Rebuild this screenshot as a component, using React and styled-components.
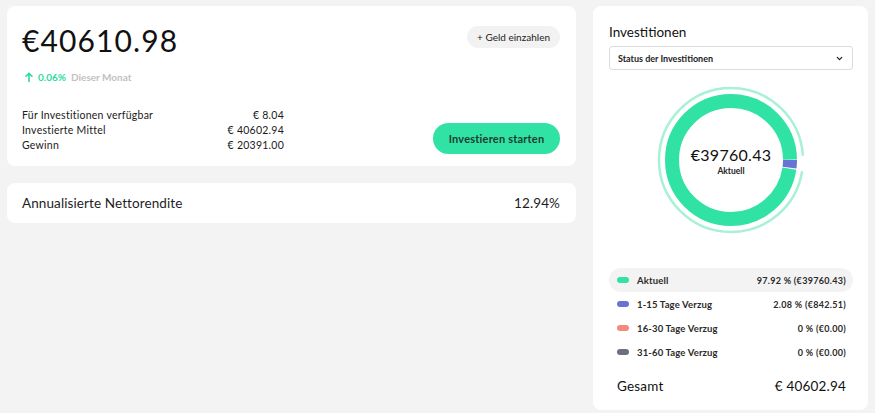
import React from "react";
import styled, { createGlobalStyle } from "styled-components";

const GlobalStyle = createGlobalStyle`
  html, body {
    margin: 0;
    padding: 0;
    background: #f3f3f3;
    font-family: "Lato", "Noto Sans", sans-serif;
    color: #1d1d1f;
  }
`;

const Page = styled.div`
  display: grid;
  grid-template-columns: 569px 275px;
  column-gap: 17px;
  align-items: start;
  padding: 6px 7px;
  width: 875px;
  height: 413px;
  box-sizing: border-box;
`;

const Column = styled.div`
  display: flex;
  flex-direction: column;
  gap: 17px;
`;

const Card = styled.div`
  background: #fff;
  border-radius: 8px;
  box-sizing: border-box;
`;

const BalanceCard = styled(Card)`
  height: 160px;
  padding: 17px 16px 0 15px;
  display: flex;
  flex-direction: column;
`;

const TopRow = styled.div`
  display: flex;
  justify-content: space-between;
  align-items: flex-start;
`;

const Balance = styled.div`
  font-size: 30px;
  font-weight: 400;
  letter-spacing: 1.1px;
  line-height: 34px;
  color: #111;
`;

const PillButton = styled.button`
  margin-top: 3px;
  border: none;
  background: #f2f2f2;
  border-radius: 12px;
  height: 22px;
  padding: 0 10px;
  font-family: inherit;
  font-size: 10px;
  color: #222;
`;

const Trend = styled.div`
  display: flex;
  align-items: center;
  gap: 5px;
  margin-top: 14px;
  margin-left: 3px;
  font-size: 10px;
`;

const TrendValue = styled.span`
  color: #2fd99f;
  font-weight: 700;
`;

const TrendLabel = styled.span`
  color: #c2c2c2;
  font-weight: 700;
`;

const BottomRow = styled.div`
  display: flex;
  justify-content: space-between;
  align-items: flex-end;
  margin-top: 25px;
`;

const Stats = styled.div`
  width: 262px;
  display: flex;
  flex-direction: column;
`;

const StatRow = styled.div`
  display: flex;
  justify-content: space-between;
  font-size: 10.5px;
  letter-spacing: 0.25px;
  line-height: 15px;
  color: #1a1a1a;
`;

const PrimaryButton = styled.button`
  border: none;
  background: #30e3a4;
  border-radius: 16px;
  height: 31px;
  width: 127px;
  margin-bottom: -1px;
  font-family: inherit;
  font-size: 11px;
  font-weight: 700;
  letter-spacing: 0.2px;
  color: #1f3a32;
`;

const ReturnCard = styled(Card)`
  height: 40px;
  padding: 0 16px 0 15px;
  display: flex;
  align-items: center;
  justify-content: space-between;
  font-size: 13.5px;
  letter-spacing: 0.1px;
`;

const SideCard = styled(Card)`
  height: 404px;
  padding: 18px 15px 0 16px;
  display: flex;
  flex-direction: column;
`;

const SideTitle = styled.div`
  font-size: 13.5px;
  line-height: 16px;
  color: #111;
`;

const Select = styled.div`
  margin-top: 6px;
  height: 24px;
  border: 1px solid #dcdcdc;
  border-radius: 3px;
  box-sizing: border-box;
  display: flex;
  align-items: center;
  justify-content: space-between;
  padding: 0 8px 0 8px;
  font-size: 9px;
  font-weight: 700;
  color: #222;
`;

const ChartWrap = styled.div`
  position: relative;
  height: 160px;
  margin-top: 10px;
  display: flex;
  justify-content: center;
`;

const ChartCenter = styled.div`
  position: absolute;
  inset: 0;
  display: flex;
  flex-direction: column;
  align-items: center;
  justify-content: center;
`;

const CenterValue = styled.div`
  font-size: 16px;
  line-height: 20px;
  color: #111;
  letter-spacing: 0.3px;
`;

const CenterLabel = styled.div`
  margin-top: 1px;
  font-size: 8.5px;
  font-weight: 700;
  color: #222;
`;

const Legend = styled.div`
  margin-top: 28px;
  display: flex;
  flex-direction: column;
`;

const LegendRow = styled.div`
  display: flex;
  align-items: center;
  height: 24px;
  padding: 0 7px 0 8px;
  border-radius: 12px;
  background: ${(p) => (p.$active ? "#f3f3f3" : "transparent")};
  font-size: 9.5px;
  font-weight: 700;
  letter-spacing: 0.15px;
  color: #2a2a2a;
`;

const Dot = styled.span`
  width: 12px;
  height: 6px;
  border-radius: 3px;
  background: ${(p) => p.$color};
  margin-right: 8px;
`;

const LegendValue = styled.span`
  margin-left: auto;
  font-size: 9px;
  letter-spacing: 0.3px;
`;

const Total = styled.div`
  margin-top: 14px;
  display: flex;
  justify-content: space-between;
  padding: 0 7px 0 8px;
  font-size: 13.5px;
  letter-spacing: 0.2px;
  color: #111;
`;

const legend = [
  { label: "Aktuell", value: "97.92 % (€39760.43)", color: "#30e3a4", active: true },
  { label: "1-15 Tage Verzug", value: "2.08 % (€842.51)", color: "#6973d6" },
  { label: "16-30 Tage Verzug", value: "0 % (€0.00)", color: "#f28b7b" },
  { label: "31-60 Tage Verzug", value: "0 % (€0.00)", color: "#6c6f7f" },
];

function Donut() {
  const r = 59;
  const c = 2 * Math.PI * r;
  const blue = c * 0.0208;
  const gap = 1;
  const green = c - blue - gap * 2;
  const ro = 72;
  const co = 2 * Math.PI * ro;
  const outerStart = co * (9 / 360);
  const outerLen = co * (347 / 360);
  return (
    <svg width="160" height="160" viewBox="0 0 160 160">
      <circle
        cx="80"
        cy="80"
        r={ro}
        fill="none"
        stroke="#a9f0d8"
        strokeWidth="2.5"
        strokeDasharray={`${outerLen} ${co}`}
        strokeDashoffset={-outerStart}
      />
      <circle
        cx="80"
        cy="80"
        r={r}
        fill="none"
        stroke="#6973d6"
        strokeWidth="14"
        strokeDasharray={`${blue} ${c}`}
      />
      <circle
        cx="80"
        cy="80"
        r={r}
        fill="none"
        stroke="#30e3a4"
        strokeWidth="14"
        strokeDasharray={`${green} ${c}`}
        strokeDashoffset={-(blue + gap)}
      />
    </svg>
  );
}

function Chevron() {
  return (
    <svg width="9" height="9" viewBox="0 0 10 10">
      <path d="M2.5 3.8 L5 6.3 L7.5 3.8" fill="none" stroke="#222" strokeWidth="1.4" strokeLinecap="round" strokeLinejoin="round" />
    </svg>
  );
}

function ArrowUp() {
  return (
    <svg width="8" height="10" viewBox="0 0 8 10">
      <path d="M4 9.5 V1.5 M1 4.3 L4 1.2 L7 4.3" fill="none" stroke="#2fd99f" strokeWidth="1.6" strokeLinecap="round" strokeLinejoin="round" />
    </svg>
  );
}

export default function App() {
  return (
    <>
      <GlobalStyle />
      <Page>
        <Column>
          <BalanceCard>
            <TopRow>
              <Balance>€40610.98</Balance>
              <PillButton>+ Geld einzahlen</PillButton>
            </TopRow>
            <Trend>
              <ArrowUp />
              <TrendValue>0.06%</TrendValue>
              <TrendLabel>Dieser Monat</TrendLabel>
            </Trend>
            <BottomRow>
              <Stats>
                <StatRow>
                  <span>Für Investitionen verfügbar</span>
                  <span>€ 8.04</span>
                </StatRow>
                <StatRow>
                  <span>Investierte Mittel</span>
                  <span>€ 40602.94</span>
                </StatRow>
                <StatRow>
                  <span>Gewinn</span>
                  <span>€ 20391.00</span>
                </StatRow>
              </Stats>
              <PrimaryButton>Investieren starten</PrimaryButton>
            </BottomRow>
          </BalanceCard>
          <ReturnCard>
            <span>Annualisierte Nettorendite</span>
            <span>12.94%</span>
          </ReturnCard>
        </Column>
        <SideCard>
          <SideTitle>Investitionen</SideTitle>
          <Select>
            <span>Status der Investitionen</span>
            <Chevron />
          </Select>
          <ChartWrap>
            <Donut />
            <ChartCenter>
              <CenterValue>€39760.43</CenterValue>
              <CenterLabel>Aktuell</CenterLabel>
            </ChartCenter>
          </ChartWrap>
          <Legend>
            {legend.map((item) => (
              <LegendRow key={item.label} $active={item.active}>
                <Dot $color={item.color} />
                <span>{item.label}</span>
                <LegendValue>{item.value}</LegendValue>
              </LegendRow>
            ))}
          </Legend>
          <Total>
            <span>Gesamt</span>
            <span>€ 40602.94</span>
          </Total>
        </SideCard>
      </Page>
    </>
  );
}
